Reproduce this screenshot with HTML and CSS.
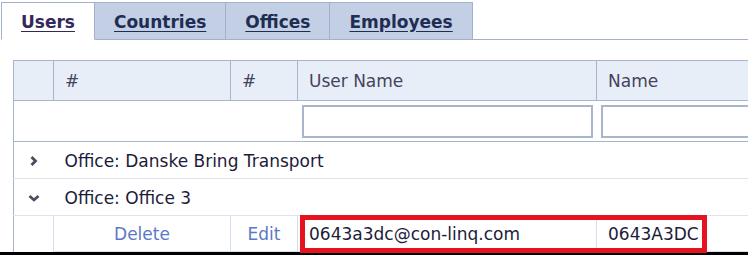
FILE: index.html
```html
<!DOCTYPE html>
<html lang="en">
<head>
    <meta charset="UTF-8">
    <title>Users</title>
    <link rel="stylesheet" href="styles.css">
</head>
<body>
    <div class="page">
        <div class="tabs">
            <a class="tab active" href="#">Users</a>
            <a class="tab" href="#">Countries</a>
            <a class="tab" href="#">Offices</a>
            <a class="tab" href="#">Employees</a>
            <div class="tab-fill"></div>
        </div>

        <div class="grid">
            <table>
                <colgroup>
                    <col class="c-toggle">
                    <col class="c-delete">
                    <col class="c-edit">
                    <col class="c-user">
                    <col class="c-name">
                </colgroup>
                <thead>
                    <tr class="head">
                        <th></th>
                        <th>#</th>
                        <th>#</th>
                        <th>User Name</th>
                        <th>Name</th>
                    </tr>
                    <tr class="filter">
                        <td></td>
                        <td></td>
                        <td></td>
                        <td><input type="text"></td>
                        <td><input type="text"></td>
                    </tr>
                </thead>
                <tbody>
                    <tr class="group">
                        <td class="toggle">
                            <svg width="14" height="14" viewBox="0 0 14 14"><polyline points="4.5,3 8.5,7 4.5,11" /></svg>
                        </td>
                        <td colspan="4">Office: Danske Bring Transport</td>
                    </tr>
                    <tr class="group">
                        <td class="toggle">
                            <svg width="14" height="14" viewBox="0 0 14 14"><polyline points="2.5,5 7,9 11.5,5" /></svg>
                        </td>
                        <td colspan="4">Office: Office 3</td>
                    </tr>
                    <tr class="data">
                        <td class="indent"></td>
                        <td class="link"><a href="#">Delete</a></td>
                        <td class="link"><a href="#">Edit</a></td>
                        <td>0643a3dc@con-linq.com</td>
                        <td>0643A3DC</td>
                    </tr>
                </tbody>
            </table>
            <div class="highlight"></div>
        </div>

        <div class="edge"></div>
    </div>
</body>
</html>
```

FILE: styles.css
```css
body {
    margin: 0;
    font-family: "DejaVu Sans", Verdana, sans-serif;
    background: #fff;
    overflow: hidden;
}
.page {
    width: 748px;
    height: 255px;
    display: flex;
    flex-direction: column;
    overflow: hidden;
}

/* tabs */
.tabs {
    display: flex;
    height: 38px;
    margin-top: 2px;
    padding-left: 1px;
    flex-shrink: 0;
}
.tab {
    box-sizing: border-box;
    height: 38px;
    padding: 1px 19px 0;
    display: flex;
    align-items: center;
    border: 1px solid #a3b1c9;
    border-left: none;
    background-color: #c2cfe5;
    color: #1f2d52;
    font-size: 17px;
    font-weight: bold;
    text-decoration: underline;
    text-underline-offset: 3px;
}
.tab.active {
    background-color: #fff;
    border-left: 1px solid #a3b1c9;
    border-bottom-color: #fff;
    color: #34285a;
}
.tab-fill {
    flex: 1;
    border-bottom: 1px solid #a3b1c9;
}

/* grid */
.grid {
    position: relative;
    margin: 20px 0 0 13px;
    height: 192px;
    flex-shrink: 0;
}
table {
    border-collapse: collapse;
    table-layout: fixed;
    width: 790px;
    font-size: 17px;
    color: #1c1c3a;
}
.c-toggle { width: 40px; }
.c-delete { width: 177px; }
.c-edit { width: 67px; }
.c-user { width: 299px; }
.c-name { width: 207px; }

td, th {
    padding: 0 11px;
    white-space: nowrap;
    overflow: hidden;
}
tr.head th {
    height: 39px;
    background-color: #e8eef8;
    border: 1px solid #a7b4ca;
    color: #44445c;
    font-weight: normal;
    text-align: left;
}
tr.filter td {
    height: 40px;
    padding: 0 4px;
    border-left: 1px solid #a7b4ca;
    border-bottom: 1px solid #a7b4ca;
}
tr.filter td + td {
    border-left: none;
}
.filter input {
    box-sizing: border-box;
    width: 100%;
    height: 33px;
    border: 2px solid #a9b5cb;
    margin: 0;
    padding: 0 6px;
}
tr.group td {
    height: 34px;
    padding-top: 2px;
    border-bottom: 1px solid #dde4f0;
}
tr.group td:first-child {
    border-left: 1px solid #a7b4ca;
}
td.toggle {
    padding: 0;
    text-align: center;
}
.toggle svg {
    display: block;
    margin: 0 auto;
}
.toggle polyline {
    fill: none;
    stroke: #4b4b5c;
    stroke-width: 2.8;
}
tr.data td {
    height: 35px;
    border: 1px solid #d6dff0;
}
tr.data td.indent {
    border: none;
    border-left: 1px solid #a7b4ca;
}
td.link {
    text-align: center;
}
td.link a {
    color: #5b78c8;
    text-decoration: none;
}

/* annotation box */
.highlight {
    position: absolute;
    left: 287px;
    top: 155px;
    width: 407px;
    height: 38px;
    box-sizing: border-box;
    border: 5px solid #e5121f;
}

.edge {
    height: 3px;
    background-color: #000;
    flex-shrink: 0;
}
```
